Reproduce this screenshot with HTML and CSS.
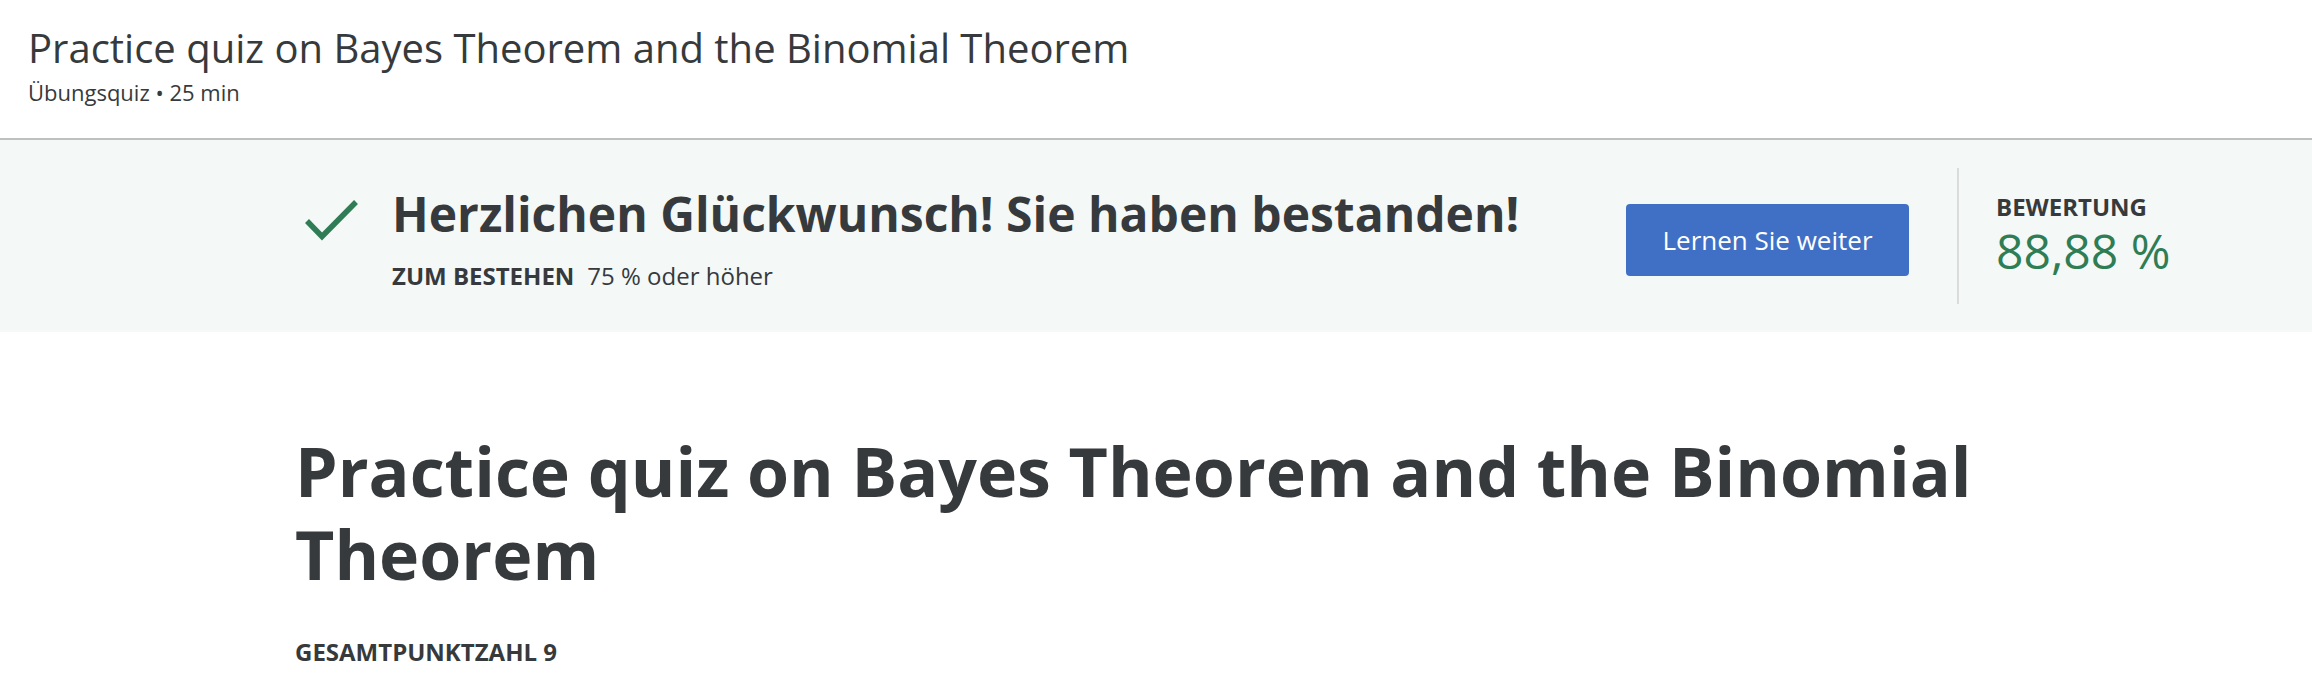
FILE: index.html
```html
<!DOCTYPE html>
<html lang="de">
<head>
<meta charset="utf-8">
<title>Practice quiz on Bayes Theorem and the Binomial Theorem</title>
<link rel="stylesheet" href="styles.css">
</head>
<body>
<header class="top-header">
  <h1 class="top-title">Practice quiz on Bayes Theorem and the Binomial Theorem</h1>
  <div class="top-meta">Übungsquiz • 25 min</div>
</header>
<section class="banner">
  <div class="banner-left">
    <svg class="check" width="54" height="42" viewBox="0 0 54 42" aria-hidden="true">
      <polyline points="2,22 17,37.5 51,3" fill="none" stroke="#2f7d55" stroke-width="5.5"/>
    </svg>
    <div class="banner-text">
      <div class="banner-headline">Herzlichen Glückwunsch! Sie haben bestanden!</div>
      <div class="banner-pass"><span class="pass-label">ZUM BESTEHEN</span><span class="pass-value">75 % oder höher</span></div>
    </div>
  </div>
  <button class="continue-btn" type="button">Lernen Sie weiter</button>
  <div class="banner-divider"></div>
  <div class="score">
    <div class="score-label">BEWERTUNG</div>
    <div class="score-value">88,88 %</div>
  </div>
</section>
<main class="content">
  <h2 class="quiz-title">Practice quiz on Bayes Theorem and the Binomial Theorem</h2>
  <div class="total-points">GESAMTPUNKTZAHL 9</div>
</main>
</body>
</html>
```
FILE: styles.css
```css
html, body {
  margin: 0;
  padding: 0;
  background: #ffffff;
}
body {
  font-family: "Open Sans", "Noto Sans", sans-serif;
  color: #373a3c;
}
.top-header {
  box-sizing: border-box;
  height: 140px;
  padding: 23.5px 28px 0 28px;
  border-bottom: 2px solid #bfbfbf;
}
.top-title {
  margin: 0;
  font-size: 40px;
  line-height: 48px;
  font-weight: 400;
  color: #373a3c;
}
.top-meta {
  margin-top: 5px;
  font-size: 22px;
  line-height: 30px;
  color: #373a3c;
}
.banner {
  display: flex;
  align-items: flex-start;
  background: #f4f8f7;
  padding: 28px 116px 28px 305px;
}
.banner-left {
  flex: 1;
  display: flex;
  align-items: flex-start;
  margin-top: 18.4px;
}
.check {
  flex: none;
  margin-top: 12.5px;
  margin-right: 33px;
}
.banner-headline {
  font-size: 48px;
  line-height: 56px;
  font-weight: 700;
  color: #373a3c;
}
.banner-pass {
  margin-top: 17.3px;
  font-size: 24px;
  line-height: 32px;
}
.pass-label {
  font-weight: 700;
  margin-right: 13px;
}
.continue-btn {
  flex: none;
  width: 283px;
  height: 72px;
  margin-top: 36px;
  border: 0;
  border-radius: 4px;
  background: #4070c5;
  color: #ffffff;
  font-family: "Open Sans", "Noto Sans", sans-serif;
  font-size: 26px;
  padding: 0;
}
.banner-divider {
  flex: none;
  width: 2px;
  height: 136px;
  margin: 0 37px 0 48px;
  background: #dcdcdc;
}
.score {
  flex: none;
  width: 200px;
  margin-top: 22.7px;
}
.score-label {
  font-size: 24px;
  line-height: 32px;
  font-weight: 700;
}
.score-value {
  margin-top: 0.7px;
  font-size: 48px;
  line-height: 56px;
  color: #2f7d55;
}
.content {
  padding: 97px 0 0 295px;
}
.quiz-title {
  margin: 0;
  max-width: 1760px;
  font-size: 68px;
  line-height: 83px;
  font-weight: 700;
  color: #373a3c;
}
.total-points {
  margin-top: 40.6px;
  font-size: 24px;
  line-height: 32px;
  font-weight: 700;
}
```
